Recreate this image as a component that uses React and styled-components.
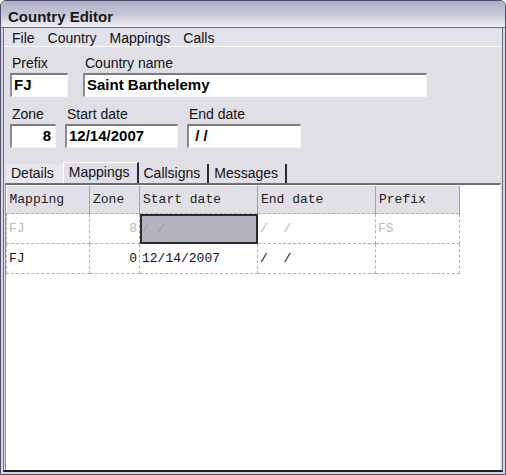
import React from "react";
import styled, { createGlobalStyle } from "styled-components";

const GlobalStyle = createGlobalStyle`
  html, body { margin: 0; padding: 0; background: #ffffff; }
  body { font-family: "Liberation Sans", Arial, sans-serif; }
`;

const mappings = [
  { mapping: "FJ", zone: "8", start: "/ /", end: "/  /", prefix: "FS", ghost: true },
  { mapping: "FJ", zone: "0", start: "12/14/2007", end: "/  /", prefix: "" },
];

const App = () => (
  <>
    <GlobalStyle />
    <Window>
      <TitleBar>Country Editor</TitleBar>
      <Client>
        <MenuBar>
          <MenuItem>File</MenuItem>
          <MenuItem>Country</MenuItem>
          <MenuItem>Mappings</MenuItem>
          <MenuItem>Calls</MenuItem>
        </MenuBar>
        <Form>
          <FieldRow gap={15}>
            <Field>
              <Label>Prefix</Label>
              <Input width={58}>FJ</Input>
            </Field>
            <Field>
              <Label>Country name</Label>
              <Input width={344}>Saint Barthelemy</Input>
            </Field>
          </FieldRow>
          <FieldRow gap={9}>
            <Field>
              <Label>Zone</Label>
              <Input width={46} align="right">8</Input>
            </Field>
            <Field>
              <Label>Start date</Label>
              <Input width={113}>12/14/2007</Input>
            </Field>
            <Field>
              <Label>End date</Label>
              <Input width={114}>&nbsp;/ /</Input>
            </Field>
          </FieldRow>
        </Form>
        <Tabs>
          <Tab variant="plain">Details</Tab>
          <Tab variant="active">Mappings</Tab>
          <Tab>Callsigns</Tab>
          <Tab>Messages</Tab>
        </Tabs>
        <Panel>
          <Grid>
            <colgroup>
              <col style={{ width: 83 }} />
              <col style={{ width: 50 }} />
              <col style={{ width: 118 }} />
              <col style={{ width: 118 }} />
              <col style={{ width: 84 }} />
            </colgroup>
            <thead>
              <tr>
                <Head>Mapping</Head>
                <Head>Zone</Head>
                <Head>Start date</Head>
                <Head>End date</Head>
                <Head>Prefix</Head>
              </tr>
            </thead>
            <tbody>
              {mappings.map((m, i) => (
                <Row key={i} ghost={m.ghost}>
                  <Cell>{m.mapping}</Cell>
                  <Cell align="right">{m.zone}</Cell>
                  <Cell selected={m.ghost}>{m.start}</Cell>
                  <Cell>{m.end}</Cell>
                  <Cell>{m.prefix}</Cell>
                </Row>
              ))}
            </tbody>
          </Grid>
        </Panel>
      </Client>
    </Window>
  </>
);

export default App;

const Window = styled.div`
  width: 506px;
  height: 475px;
  box-sizing: border-box;
  border: 1px solid #50506a;
  border-radius: 6px 6px 0 0;
  background: #d6d6e0;
  display: flex;
  flex-direction: column;
  overflow: hidden;
`;

const TitleBar = styled.div`
  height: 27px;
  box-sizing: border-box;
  padding: 7px 0 0 7px;
  font-size: 15px;
  font-weight: bold;
  color: #1a1a1a;
  background: linear-gradient(#b0b0c6, #c9c9d9 55%, #f2f2f6);
  border-bottom: 1px solid #70707e;
`;

const Client = styled.div`
  flex: 1;
  margin: 0 2px 2px 2px;
  border-left: 1px solid #6c6c80;
  border-right: 1px solid #6c6c80;
  border-bottom: 2px solid #1e1e28;
  background: #e0dfe6;
  display: flex;
  flex-direction: column;
`;

const MenuBar = styled.div`
  display: flex;
  gap: 13px;
  height: 19px;
  box-sizing: border-box;
  padding: 1px 0 0 8px;
  background: #e2e2ee;
  border-bottom: 1px solid #ffffff;
  font-size: 14px;
  color: #111;
`;

const MenuItem = styled.span`
  line-height: 18px;
`;

const Form = styled.div`
  display: flex;
  flex-direction: column;
  gap: 9px;
  padding: 8px 0 0 6px;
`;

const FieldRow = styled.div`
  display: flex;
  gap: ${p => p.gap}px;
  align-items: flex-end;
`;

const Field = styled.div`
  display: flex;
  flex-direction: column;
  gap: 2px;
`;

const Label = styled.span`
  font-size: 14px;
  line-height: 16px;
  padding-left: 2px;
  color: #111;
`;

const Input = styled.div`
  width: ${p => p.width}px;
  height: 24px;
  box-sizing: border-box;
  border-top: 2px solid #7a7a80;
  border-left: 2px solid #8a8a90;
  border-right: 1px solid #f4f4f4;
  border-bottom: 1px solid #f4f4f4;
  background: #ffffff;
  padding: 0 4px 0 2px;
  font-size: 15px;
  font-weight: bold;
  line-height: 20px;
  text-align: ${p => p.align || "left"};
  color: #000;
  white-space: pre;
`;

const Tabs = styled.div`
  display: flex;
  align-items: flex-end;
  height: 22px;
  margin-top: 13px;
  padding-left: 2px;
`;

const Tab = styled.div`
  height: ${p => (p.variant === "active" ? 21 : 19)}px;
  box-sizing: border-box;
  padding: 0 7px 0 5px;
  font-size: 14px;
  line-height: 18px;
  color: #111;
  background: ${p => (p.variant === "plain" ? "#e8e8ee" : "#e0dfe6")};
  border-right: 2px solid ${p => (p.variant === "plain" ? "transparent" : "#2a2a30")};
  ${p => p.variant === "active" && "border-top: 1px solid #ffffff; border-left: 1px solid #ffffff; line-height: 19px;"}
`;

const Panel = styled.div`
  flex: 1;
  margin: 0 1px 0 1px;
  border-top: 2px solid #6e6e78;
  border-left: 1px solid #8e8e98;
  border-right: 1px solid #f0f0f0;
  background: #ffffff;
  padding-top: 1px;
`;

const Grid = styled.table`
  border-collapse: collapse;
  table-layout: fixed;
  width: 453px;
  font-family: "Liberation Mono", "DejaVu Sans Mono", monospace;
  font-size: 13px;
`;

const Head = styled.th`
  height: 27px;
  padding: 0 3px;
  background: #e0e0e6;
  border-right: 1px solid #a0a0a8;
  font-weight: normal;
  text-align: left;
  color: #222;
`;

const Row = styled.tr`
  color: ${p => (p.ghost ? "#b8b8bc" : "#111")};
  height: 30px;
`;

const Cell = styled.td`
  padding: 0 2px;
  border: 1px dashed #b0b0b4;
  text-align: ${p => p.align || "left"};
  white-space: pre;
  ${p => p.selected && "background: #b4b4c0; outline: 2px solid #2a2a30; outline-offset: -2px; color: #a0a0a8;"}
`;
